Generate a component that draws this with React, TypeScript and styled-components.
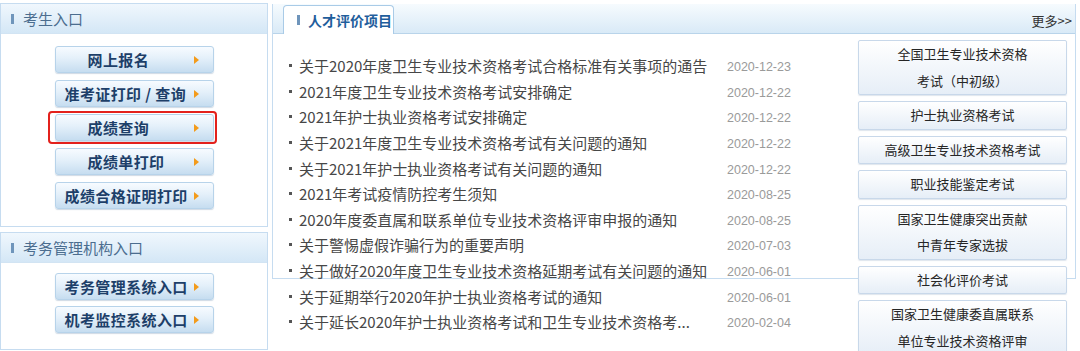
import React from "react";
import styled, { createGlobalStyle } from "styled-components";

const GlobalStyle = createGlobalStyle`
  html, body {
    margin: 0;
    padding: 0;
    background: #ffffff;
    overflow: hidden;
  }
  body {
    font-family: "Noto Sans CJK SC", "Noto Sans", sans-serif;
  }
`;

const Page = styled.div`
  display: flex;
  align-items: flex-start;
  gap: 4px;
  width: 1080px;
  height: 351px;
`;

const Sidebar = styled.div`
  display: flex;
  flex-direction: column;
  gap: 5px;
  width: 268px;
  padding-top: 3px;
`;

const SidePanel = styled.section<{ $height: number }>`
  box-sizing: border-box;
  height: ${(p) => p.$height}px;
  border: 1px solid #c6dcf0;
  background: #ffffff;
`;

const SideHeader = styled.div`
  display: flex;
  align-items: center;
  gap: 9px;
  height: 29px;
  padding-left: 10px;
  background: linear-gradient(#f0f7fd, #d4e7f6);
  border-bottom: 1px solid #d2e4f3;
  font-size: 15px;
  color: #4b6d8f;
`;

const Mark = styled.span`
  display: inline-block;
  flex: none;
  width: 3px;
  height: 10px;
  background: #6f95bb;
`;

const ButtonStack = styled.div<{ $top: number; $gap: number }>`
  display: flex;
  flex-direction: column;
  align-items: center;
  gap: ${(p) => p.$gap}px;
  padding-top: ${(p) => p.$top}px;
`;

const EntryButton = styled.a<{ $indent: number; $marked?: boolean }>`
  position: relative;
  box-sizing: border-box;
  display: flex;
  align-items: center;
  width: 159px;
  height: 27px;
  padding-left: ${(p) => p.$indent}px;
  border: 1px solid #b7d3ea;
  border-radius: 3px;
  background: linear-gradient(#f7fbff 0%, #e4f0fa 45%, #c6ddf0 100%);
  box-shadow: 0 1px 1px rgba(120, 150, 180, 0.35);
  font-size: 15px;
  font-weight: 700;
  letter-spacing: 0.4px;
  color: #1d3f69;
  white-space: nowrap;
  cursor: pointer;

  &::before {
    content: "";
    position: absolute;
    right: 14px;
    top: 9px;
    border-left: 5px solid #f39b1b;
    border-top: 4px solid transparent;
    border-bottom: 4px solid transparent;
  }

  ${(p) =>
    p.$marked &&
    `
    &::after {
      content: "";
      position: absolute;
      top: -4px;
      left: -8px;
      right: -4px;
      bottom: -4px;
      border: 2px solid #e3211c;
      border-radius: 4px;
    }
  `}
`;

const MainPanel = styled.section`
  box-sizing: border-box;
  width: 804px;
  height: 275px;
  margin-top: 4px;
  border: 1px solid #c6dcf0;
  border-top: none;
  overflow: visible;
`;

const MainHeader = styled.div`
  display: flex;
  align-items: flex-end;
  justify-content: space-between;
  height: 29px;
  padding: 0 3px 0 10px;
  background: linear-gradient(#f6fbfe, #d9eaf7);
  border-bottom: 1px solid #b9d4ea;
`;

const Tab = styled.div`
  box-sizing: border-box;
  display: flex;
  align-items: center;
  gap: 8px;
  width: 111px;
  height: 29px;
  margin-bottom: -1px;
  padding-left: 13px;
  border: 1px solid #a9cbe7;
  border-bottom: none;
  border-radius: 4px 4px 0 0;
  background: #ffffff;
  font-size: 14px;
  font-weight: 700;
  color: #1f5e9c;
  white-space: nowrap;
`;

const More = styled.a`
  align-self: center;
  margin-top: 3px;
  font-size: 13px;
  color: #333333;
  cursor: pointer;
`;

const Body = styled.div`
  display: flex;
  justify-content: space-between;
  padding: 0 8px 0 16px;
`;

const NewsList = styled.ul`
  list-style: none;
  margin: 19px 0 0;
  padding: 0;
`;

const NewsItem = styled.li`
  display: flex;
  align-items: center;
  height: 25.6px;
  color: #474747;
  font-size: 15px;
  white-space: nowrap;
`;

const Dot = styled.span`
  width: 3px;
  height: 3px;
  margin-right: 7px;
  background: #555555;
`;

const NewsTitle = styled.span`
  width: 428px;
`;

const NewsDate = styled.span`
  margin-top: 3px;
  font-family: "Liberation Sans", Arial, sans-serif;
  font-size: 12.5px;
  color: #9a9a9a;
`;

const Projects = styled.div`
  display: flex;
  flex-direction: column;
  gap: 6px;
  width: 209px;
  padding-top: 6px;
`;

const ProjectButton = styled.a`
  box-sizing: border-box;
  display: block;
  padding: 0 4px;
  border: 1px solid #c8d8ea;
  border-radius: 2px;
  background: linear-gradient(#ffffff, #e6eef7);
  box-shadow: 0 1px 1px rgba(150, 170, 195, 0.3);
  text-align: center;
  font-size: 13px;
  line-height: 26.5px;
  color: #262626;
  cursor: pointer;
`;

const candidateEntries = [
  { label: "网上报名", indent: 32 },
  { label: "准考证打印 / 查询", indent: 9 },
  { label: "成绩查询", indent: 32, marked: true },
  { label: "成绩单打印", indent: 32 },
  { label: "成绩合格证明打印", indent: 9 },
];

const agencyEntries = [
  { label: "考务管理系统入口", indent: 9 },
  { label: "机考监控系统入口", indent: 9 },
];

const news = [
  ["关于2020年度卫生专业技术资格考试合格标准有关事项的通告", "2020-12-23"],
  ["2021年度卫生专业技术资格考试安排确定", "2020-12-22"],
  ["2021年护士执业资格考试安排确定", "2020-12-22"],
  ["关于2021年度卫生专业技术资格考试有关问题的通知", "2020-12-22"],
  ["关于2021年护士执业资格考试有关问题的通知", "2020-12-22"],
  ["2021年考试疫情防控考生须知", "2020-08-25"],
  ["2020年度委直属和联系单位专业技术资格评审申报的通知", "2020-08-25"],
  ["关于警惕虚假诈骗行为的重要声明", "2020-07-03"],
  ["关于做好2020年度卫生专业技术资格延期考试有关问题的通知", "2020-06-01"],
  ["关于延期举行2020年护士执业资格考试的通知", "2020-06-01"],
  ["关于延长2020年护士执业资格考试和卫生专业技术资格考...", "2020-02-04"],
];

const projects = [
  ["全国卫生专业技术资格", "考试（中初级）"],
  ["护士执业资格考试"],
  ["高级卫生专业技术资格考试"],
  ["职业技能鉴定考试"],
  ["国家卫生健康突出贡献", "中青年专家选拔"],
  ["社会化评价考试"],
  ["国家卫生健康委直属联系", "单位专业技术资格评审"],
];

export default function App() {
  return (
    <>
      <GlobalStyle />
      <Page>
        <Sidebar>
          <SidePanel $height={224}>
            <SideHeader>
              <Mark />
              考生入口
            </SideHeader>
            <ButtonStack $top={12} $gap={7}>
              {candidateEntries.map((e) => (
                <EntryButton key={e.label} $indent={e.indent} $marked={e.marked}>
                  {e.label}
                </EntryButton>
              ))}
            </ButtonStack>
          </SidePanel>
          <SidePanel $height={118}>
            <SideHeader>
              <Mark />
              考务管理机构入口
            </SideHeader>
            <ButtonStack $top={10} $gap={6}>
              {agencyEntries.map((e) => (
                <EntryButton key={e.label} $indent={e.indent}>
                  {e.label}
                </EntryButton>
              ))}
            </ButtonStack>
          </SidePanel>
        </Sidebar>

        <MainPanel>
          <MainHeader>
            <Tab>
              <Mark />
              人才评价项目
            </Tab>
            <More>更多&gt;&gt;</More>
          </MainHeader>
          <Body>
            <NewsList>
              {news.map(([title, date]) => (
                <NewsItem key={title}>
                  <Dot />
                  <NewsTitle>{title}</NewsTitle>
                  <NewsDate>{date}</NewsDate>
                </NewsItem>
              ))}
            </NewsList>
            <Projects>
              {projects.map((lines) => (
                <ProjectButton key={lines.join("")}>
                  {lines.map((l) => (
                    <div key={l}>{l}</div>
                  ))}
                </ProjectButton>
              ))}
            </Projects>
          </Body>
        </MainPanel>
      </Page>
    </>
  );
}
